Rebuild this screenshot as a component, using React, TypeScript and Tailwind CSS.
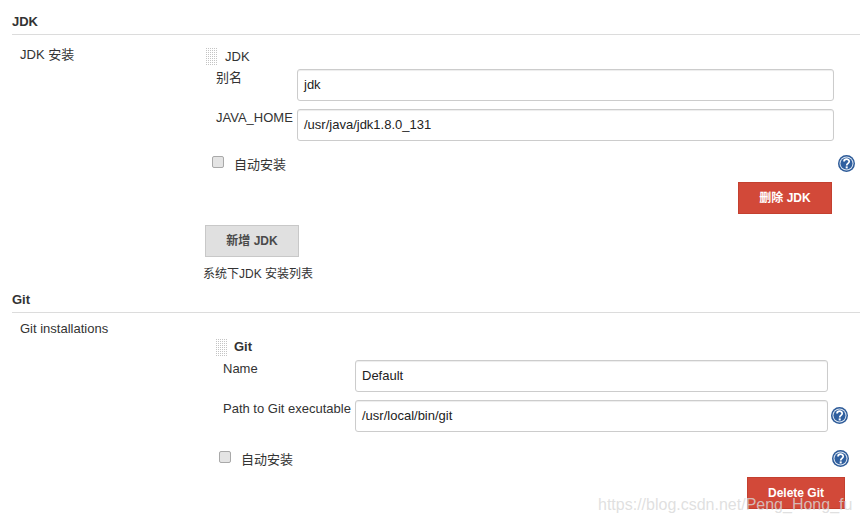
import { ReactNode } from 'react';

const cjk = "font-['Liberation_Sans','Noto_Sans_CJK_SC',sans-serif]";

function Handle() {
  return (
    <svg width="11" height="18" viewBox="0 0 11 18" className="shrink-0">
      <defs>
        <pattern id="grip" width="2" height="2" patternUnits="userSpaceOnUse">
          <rect width="1" height="1" fill="#c4c4c4" />
        </pattern>
      </defs>
      <rect width="11" height="18" fill="url(#grip)" />
    </svg>
  );
}

function HelpIcon() {
  return (
    <svg width="17" height="17" viewBox="0 0 17 17" className="shrink-0">
      <circle cx="8.5" cy="8.5" r="8.5" fill="#2c5a98" />
      <circle cx="8.5" cy="8.5" r="7" fill="#dfe8f3" />
      <circle cx="8.5" cy="8.5" r="6" fill="#2f5f9f" />
      <path d="M6 6.6c0-3.2 5.2-3.2 5.2-.2 0 1.9-2.5 2-2.5 4" fill="none" stroke="#fff" strokeWidth="1.7" />
      <rect x="7.7" y="11.4" width="2" height="2" fill="#fff" />
    </svg>
  );
}

function SectionTitle({ children }: { children: ReactNode }) {
  return (
    <div className="ml-3 border-b border-[#dcdcdc] text-[13px] leading-[15px] font-bold text-[#333]">
      {children}
    </div>
  );
}

function Field({ label, value, labelWidth, help }: { label: string; value: string; labelWidth: string; help?: boolean }) {
  return (
    <div className="flex items-start">
      <div className={`${labelWidth} pt-[2px] text-[#333]`}>{label}</div>
      <div className="h-8 flex-1 rounded-[3px] border border-[#ccc] bg-white px-[6px] text-[13px] leading-[30px] text-[#222] shadow-[inset_0_1px_1px_rgba(0,0,0,0.075)]">
        {value}
      </div>
      {help && <div className="ml-[3px] pt-[7px] pr-px"><HelpIcon /></div>}
    </div>
  );
}

function AutoInstall() {
  return (
    <div className="flex items-center gap-[10px]">
      <span className="mb-1 h-3 w-3 rounded-[2px] border border-[#a9a9a9] bg-[#e4e4e4]" />
      <span className="pt-[2px] text-[#333]">自动安装</span>
    </div>
  );
}

export default function App() {
  return (
    <div className={`relative h-[524px] w-[860px] overflow-hidden bg-white text-[13px] leading-[14px] ${cjk}`}>
      <div className="pt-[14px]">
        <SectionTitle><div className="pb-[5px]">JDK</div></SectionTitle>

        <div className="flex pt-[12px]">
          <div className="w-[205px] shrink-0 pl-5 pt-[1px] text-[#333]">JDK 安装</div>
          <div className="flex-1">
            <div className="flex items-center gap-2 pt-[1px] pl-[1px] text-[#333]">
              <Handle />
              <span>JDK</span>
            </div>
            <div className="flex flex-col gap-2 pl-[11px] pr-[26px] pt-[3px]">
              <Field label="别名" value="jdk" labelWidth="w-[81px]" />
              <Field label="JAVA_HOME" value="/usr/java/jdk1.8.0_131" labelWidth="w-[81px]" />
            </div>
            <div className="flex items-center justify-between pl-[7px] pr-[5px] pt-[14px]">
              <AutoInstall />
              <HelpIcon />
            </div>
            <div className="flex justify-end pr-[28px] pt-[10px]">
              <button className="h-8 w-[94px] border border-[#c4402f] bg-[#d24939] text-[12px] font-bold text-white">删除 JDK</button>
            </div>
            <button className="mt-[11px] h-8 w-[94px] border border-[#c8c8c8] bg-[#e0e0e0] text-[12px] font-bold text-[#4a4a4a]">新增 JDK</button>
            <div className="-ml-[2px] pt-[10px] text-[12px] text-[#333]">系统下JDK 安装列表</div>
          </div>
        </div>

        <div className="pt-[11px]">
          <SectionTitle><div className="pb-[5px]">Git</div></SectionTitle>
        </div>

        <div className="flex pt-[9px]">
          <div className="w-[205px] shrink-0 pl-5 text-[#333]">Git installations</div>
          <div className="flex-1">
            <div className="flex items-center gap-[7px] pl-[11px] pt-[17px] text-[#333]">
              <Handle />
              <span className="pb-[2px] font-bold">Git</span>
            </div>
            <div className="flex flex-col gap-2 pl-[18px] pr-[11px] pt-[3px]">
              <div className="pr-[21px]">
                <Field label="Name" value="Default" labelWidth="w-[132px]" />
              </div>
              <Field label="Path to Git executable" value="/usr/local/bin/git" labelWidth="w-[132px]" help />
            </div>
            <div className="flex items-center justify-between pl-[14px] pr-[11px] pt-[18px]">
              <AutoInstall />
              <HelpIcon />
            </div>
            <div className="flex justify-end pr-[15px] pt-[10px]">
              <button className="h-8 w-[98px] border border-[#c4402f] bg-[#d24939] text-[12px] font-bold text-white">Delete Git</button>
            </div>
          </div>
        </div>
      </div>

      {/* csdn watermark, sits over the button */}
      <div className="absolute left-[598px] top-[495px] text-[16px] leading-[20px] whitespace-nowrap text-[#d8d8d8]/80">
        https://blog.csdn.net/Peng_Hong_fu
      </div>
    </div>
  );
}
